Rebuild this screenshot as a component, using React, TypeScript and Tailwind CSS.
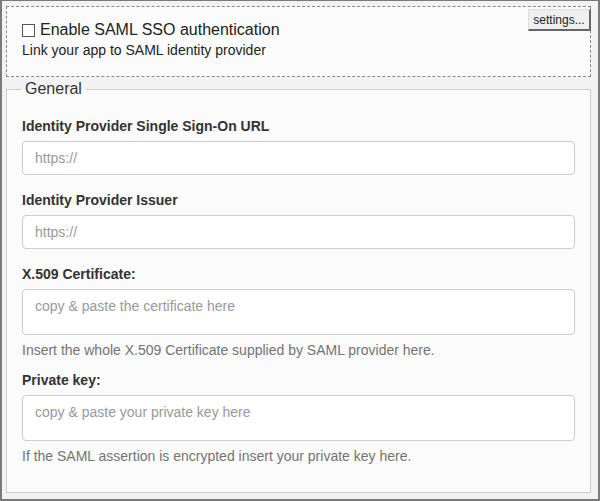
import React from 'react';

const FIELDS = [
  { id: 'sso-url', label: 'Identity Provider Single Sign-On URL', placeholder: 'https://', multiline: false },
  { id: 'issuer', label: 'Identity Provider Issuer', placeholder: 'https://', multiline: false },
  {
    id: 'cert',
    label: 'X.509 Certificate:',
    placeholder: 'copy & paste the certificate here',
    multiline: true,
    help: 'Insert the whole X.509 Certificate supplied by SAML provider here.',
  },
  {
    id: 'private-key',
    label: 'Private key:',
    placeholder: 'copy & paste your private key here',
    multiline: true,
    help: 'If the SAML assertion is encrypted insert your private key here.',
  },
];

export default function App() {
  return (
    <div
      className="w-[600px] h-[501px] bg-[#f2f2f2] border-[#7a7a7a] border-t border-l-2 border-r-2 border-b-2 pt-[5px] pl-[4px] pr-[7px] text-[#333]"
      style={{ fontFamily: '"Liberation Sans", Arial, sans-serif' }}
    >
      {/* SSO toggle */}
      <div className="relative border border-dashed border-[#888] bg-[#fbfbfb] pt-[13px] pb-[16px] pl-[15px]">
        <label className="flex items-center h-[20px] text-[16px] text-[#222]">
          <span className="w-[13px] h-[13px] border border-[#555] bg-white mr-[5px]" />
          Enable SAML SSO authentication
        </label>
        <p className="text-[14px] leading-[20px] text-[#222]">Link your app to SAML identity provider</p>
        <button className="absolute top-[2px] right-[-1px] w-[63px] h-[22px] bg-[#efefef] border-t border-l border-[#ddd] border-r-2 border-b-2 border-r-[#666] border-b-[#666] text-[12px] text-[#222] leading-none">
          settings...
        </button>
      </div>

      {/* General */}
      <fieldset className="mt-[2px] border border-[#ccc] bg-[#fbfbfb] px-[15px] pt-[17px] pb-[26px]">
        <legend className="-ml-px px-[4px] text-[16px] leading-[20px] text-[#333]">General</legend>
        {FIELDS.map((field, i) => (
          <div key={field.id} className={field.help || i === FIELDS.length - 1 ? '' : 'mb-[15px]'}>
            <label htmlFor={field.id} className="block mb-[5px] text-[14px] leading-[20px] font-bold text-[#333]">
              {field.label}
            </label>
            {field.multiline ? (
              <textarea
                id={field.id}
                placeholder={field.placeholder}
                className="block w-full h-[46px] resize-none rounded-[4px] border border-[#ccc] bg-white px-[12px] py-[6px] text-[14px] leading-[20px] placeholder:text-[#999] outline-none"
              />
            ) : (
              <input
                id={field.id}
                placeholder={field.placeholder}
                className="block w-full h-[34px] rounded-[4px] border border-[#ccc] bg-white px-[12px] text-[14px] placeholder:text-[#999] outline-none"
              />
            )}
            {field.help && (
              <p className={`mt-[5px] text-[14px] leading-[20px] text-[#737373] ${i === FIELDS.length - 1 ? '' : 'mb-[10px]'}`}>
                {field.help}
              </p>
            )}
          </div>
        ))}
      </fieldset>
    </div>
  );
}
